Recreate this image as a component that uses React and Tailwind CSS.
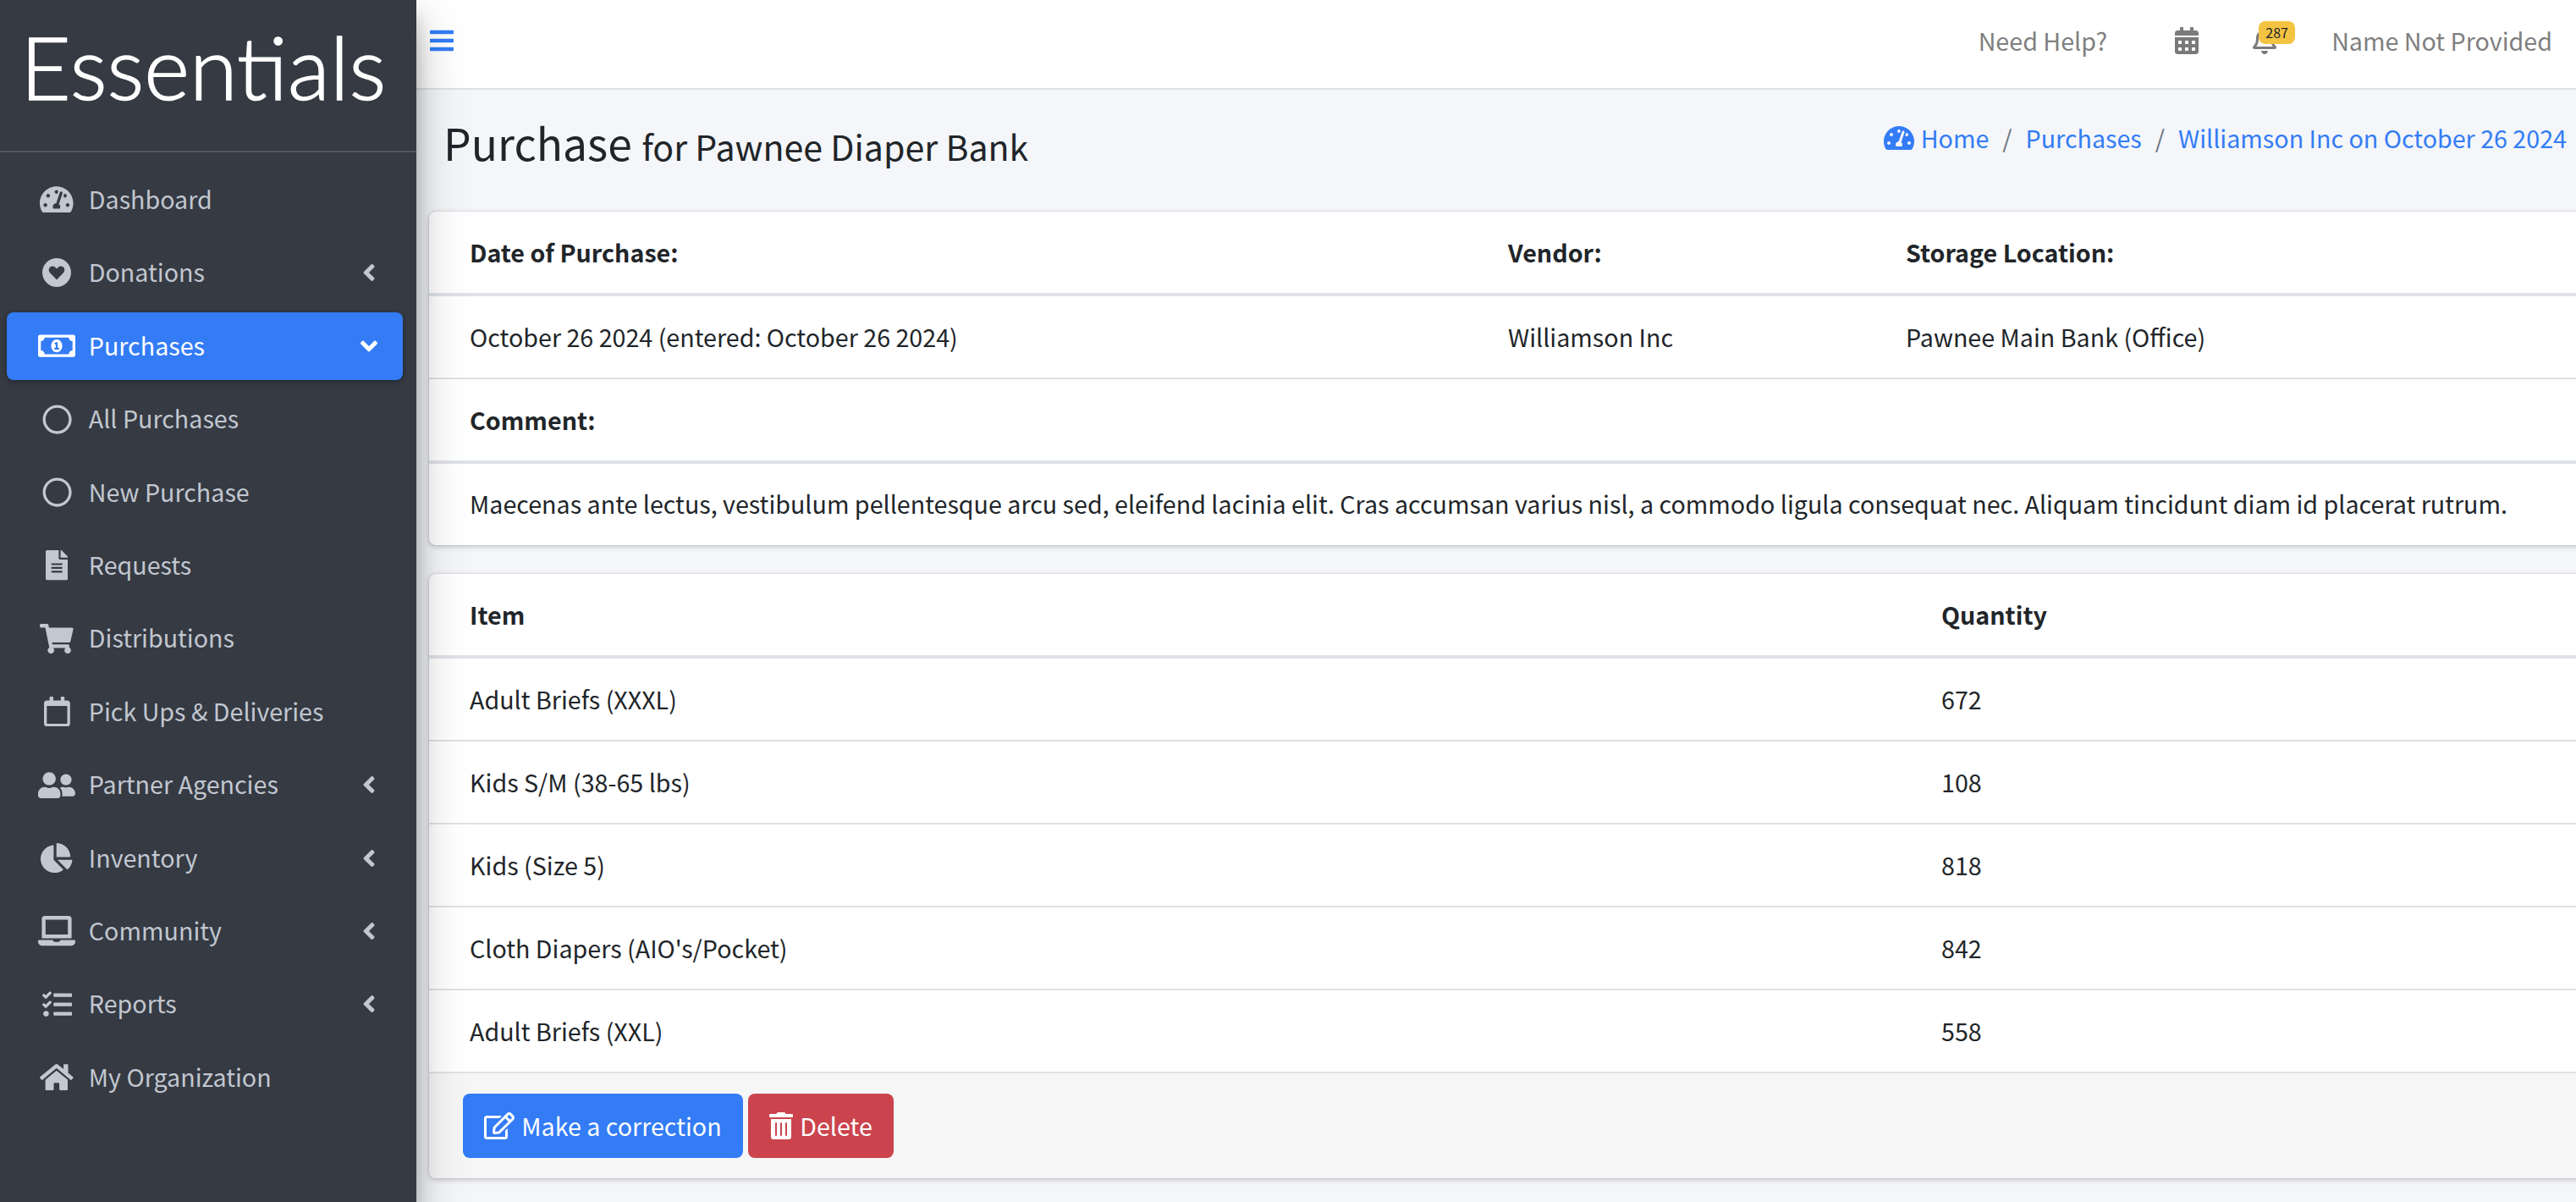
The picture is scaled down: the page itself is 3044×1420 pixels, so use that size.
import React from "react";
import { FaTachometerAlt, FaRegMoneyBillAlt, FaRegCircle, FaFileAlt, FaShoppingCart, FaRegCalendar, FaUserFriends, FaChartPie, FaLaptop, FaTasks, FaHome, FaAngleLeft, FaAngleDown, FaBars, FaCalendarAlt, FaRegBell, FaRegEdit, FaTrashAlt } from "react-icons/fa";

const font = "font-['Noto_Sans_CJK_SC','Source_Sans_Pro',sans-serif]";

function HeartCircle({ className }) {
  return (
    <svg viewBox="0 0 34 34" className={className} fill="currentColor">
      <path fillRule="evenodd" d="M17 0a17 17 0 1 0 0 34a17 17 0 0 0 0-34zM17 25.5L9.2 17.4c-2-2.1-2-5.2 0-6.9c1.9-1.5 4.6-1.2 6.3 .5L17 12.5l1.5-1.5c1.7-1.7 4.4-2 6.3-.5c2 1.7 2 4.8 0 6.9z" />
    </svg>
  );
}

const nav = [
  { label: "Dashboard", Icon: FaTachometerAlt, size: "h-[35.2px] w-[39.6px]" },
  { label: "Donations", Icon: HeartCircle, size: "w-[34px] h-[34px]", caret: true },
  { label: "Purchases", Icon: FaRegMoneyBillAlt, size: "h-[35.2px] w-[44px]", active: true },
  { label: "All Purchases", Icon: FaRegCircle, size: "h-[35.2px] w-[35.2px]" },
  { label: "New Purchase", Icon: FaRegCircle, size: "h-[35.2px] w-[35.2px]" },
  { label: "Requests", Icon: FaFileAlt, size: "h-[35.2px] w-[26.4px]" },
  { label: "Distributions", Icon: FaShoppingCart, size: "h-[35.2px] w-[39.6px]" },
  { label: "Pick Ups & Deliveries", Icon: FaRegCalendar, size: "h-[35.2px] w-[30.8px]" },
  { label: "Partner Agencies", Icon: FaUserFriends, size: "h-[35.2px] w-[44px]", caret: true },
  { label: "Inventory", Icon: FaChartPie, size: "h-[35.2px] w-[37.4px]", caret: true },
  { label: "Community", Icon: FaLaptop, size: "h-[35.2px] w-[44px]", caret: true },
  { label: "Reports", Icon: FaTasks, size: "h-[35.2px] w-[35.2px]", caret: true },
  { label: "My Organization", Icon: FaHome, size: "h-[35.2px] w-[39.6px]" },
];

function NavItem({ label, Icon, size, caret, active }) {
  return (
    <li className={`ml-2 mr-4 mb-[6.4px] h-20 flex items-center rounded-lg pl-8 pr-8 ${active ? "bg-[#337cf6] text-white shadow-[0_2px_6px_rgba(0,0,0,0.35)]" : "text-[#c2c7d0]"}`}>
      <span className="w-[51.2px] ml-[1.6px] mr-[12px] flex justify-center shrink-0">
        <Icon className={`${size} shrink-0`} />
      </span>
      <span className="flex-1 text-[28.67px] leading-[48px] pb-[2px]">{label}</span>
      {caret && <FaAngleLeft className="h-[32px] w-[16px] mr-0" />}
      {active && <FaAngleDown className="h-[32px] w-[20px] -mr-[2px]" />}
    </li>
  );
}

function Row({ children, h, head, last }) {
  return (
    <div className={`flex items-center px-[48px] whitespace-nowrap text-[#212529] border-[#dee2e6] ${h} ${head ? "font-bold border-b-[4px]" : last ? "" : "border-b-[2px]"}`}>
      {children}
    </div>
  );
}

const items = [
  ["Adult Briefs (XXXL)", "672"],
  ["Kids S/M (38-65 lbs)", "108"],
  ["Kids (Size 5)", "818"],
  ["Cloth Diapers (AIO's/Pocket)", "842"],
  ["Adult Briefs (XXL)", "558"],
];

export default function App() {
  return (
    <div className={`${font} flex w-[3044px] h-[1420px] overflow-hidden bg-[#f4f6f9] text-[28.67px] leading-[48px]`}>
      <aside className="relative z-10 w-[492px] shrink-0 bg-[#353a43] shadow-[0_28px_56px_rgba(0,0,0,0.25),0_20px_20px_rgba(0,0,0,0.22)]">
        <div className="h-[180px] border-b-[2px] border-[#4f5962] pt-[22px] pl-[24px]">
          <span className="font-['Lato',sans-serif] font-light text-[103px] leading-[112px] text-white tracking-[0px] [-webkit-text-stroke:1.5px_#fff]">Essentials</span>
        </div>
        <ul className="pt-[16px]">
          {nav.map((n) => <NavItem key={n.label} {...n} />)}
        </ul>
      </aside>
      <div className="flex-1 min-w-0 flex flex-col">
        <header className="h-[106px] shrink-0 bg-white border-b-[2px] border-[#dee2e6] flex items-center pb-[8px] pl-[16px] pr-[28px] text-[#7f7f7f]">
          <FaBars className="text-[#337cf6] h-[32px] w-[28px]" />
          <span className="ml-auto">Need Help?</span>
          <FaCalendarAlt className="ml-[80px] h-[32px] w-[28px] text-[#7a7a7a]" />
          <span className="relative ml-[64px]">
            <FaRegBell className="h-[32px] w-[28px] text-[#7a7a7a]" />
            <span className="absolute -top-[7px] left-[7px] w-[43px] h-[27px] rounded-[8px] bg-[#f5c342] text-[#212529] text-[16px] leading-[26px] text-center">287</span>
          </span>
          <span className="ml-[65px]">Name Not Provided</span>
        </header>
        <div className="flex items-center h-[144px] shrink-0 pb-[16px] pl-[32px] pr-[11px]">
          <h1 className="text-[#212529] text-[51.6px] leading-[68px]">Purchase <small className="text-[41.1px]">for Pawnee Diaper Bank</small></h1>
          <div className="ml-auto flex items-center text-[#337cf6] -mt-[14px]">
            <FaTachometerAlt className="h-[32px] w-[36px] mr-[8px]" />
            <span>Home</span>
            <span className="px-[16px] text-[#6c757d]">/</span>
            <span>Purchases</span>
            <span className="px-[16px] text-[#6c757d]">/</span>
            <span>Williamson Inc on October 26 2024</span>
          </div>
        </div>
        <div className="w-[2600px] ml-[15px]">
          <section className="bg-white rounded-[8px] shadow-[0_0_2px_rgba(0,0,0,0.2),0_2px_6px_rgba(0,0,0,0.2)]">
            <Row head h="h-[100px]"><span className="w-[1227px]">Date of Purchase:</span><span className="w-[470px]">Vendor:</span><span>Storage Location:</span></Row>
            <Row h="h-[98px]"><span className="w-[1227px]">October 26 2024 (entered: October 26 2024)</span><span className="w-[470px]">Williamson Inc</span><span>Pawnee Main Bank (Office)</span></Row>
            <Row head h="h-[100px]">Comment:</Row>
            <Row last h="h-[96px] pb-[2px]">Maecenas ante lectus, vestibulum pellentesque arcu sed, eleifend lacinia elit. Cras accumsan varius nisl, a commodo ligula consequat nec. Aliquam tincidunt diam id placerat rutrum.</Row>
          </section>
          <section className="mt-[34px] bg-white rounded-[8px] shadow-[0_0_2px_rgba(0,0,0,0.2),0_2px_6px_rgba(0,0,0,0.2)] overflow-hidden">
            <Row head h="h-[100px]"><span className="w-[1739px]">Item</span><span>Quantity</span></Row>
            {items.map(([a, b]) => (
              <Row key={a} h="h-[98px]"><span className="w-[1739px]">{a}</span><span>{b}</span></Row>
            ))}
            <div className="bg-[#f6f6f7] h-[124px] flex items-start pt-[24px] pl-[40px] gap-[6px] text-white">
              <button className="h-[76px] w-[331px] rounded-[8px] bg-[#337cf6] flex items-center justify-center gap-[8px]"><FaRegEdit className="h-[32px] w-[36px]" />Make a correction</button>
              <button className="h-[76px] w-[172px] rounded-[8px] bg-[#cb444d] flex items-center justify-center gap-[8px]"><FaTrashAlt className="h-[32px] w-[28px]" />Delete</button>
            </div>
          </section>
        </div>
      </div>
    </div>
  );
}
